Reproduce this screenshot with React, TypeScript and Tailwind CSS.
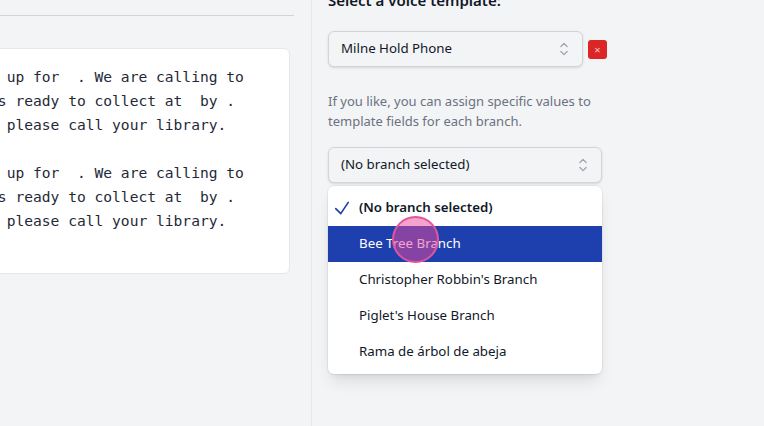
import * as React from "react"

const mono = { fontFamily: '"DejaVu Sans Mono", "Liberation Mono", monospace' }

const messageLines = [
  "ur hold is up for  . We are calling to",
  "our item is ready to collect at  by .",
  "questions, please call your library.",
  "",
  "ur hold is up for  . We are calling to",
  "our item is ready to collect at  by .",
  "questions, please call your library.",
  "",
]

const branches = [
  "(No branch selected)",
  "Bee Tree Branch",
  "Christopher Robbin's Branch",
  "Piglet's House Branch",
  "Rama de árbol de abeja",
]

function UpDown() {
  return (
    <svg viewBox="0 0 24 24" fill="none" stroke="currentColor" strokeWidth={1.5} className="w-5 h-5 shrink-0 text-[#9ca3af]">
      <path strokeLinecap="round" strokeLinejoin="round" d="M8.25 15 12 18.75 15.75 15m-7.5-6L12 5.25 15.75 9" />
    </svg>
  )
}

export default function App() {
  return (
    <div
      className="flex h-[426px] w-[764px] overflow-hidden bg-[#f3f4f6] text-[#111827]"
      style={{ fontFamily: '"Noto Sans", "Open Sans", sans-serif' }}
    >
      {/* Left: message preview */}
      <div className="w-[312px] shrink-0 overflow-hidden border-r border-[#e5e7eb]">
        <div className="ml-[-107px] w-[401px]">
          <div className="h-[16px] border-b border-[#d1d5db]" />
          <div className="mt-[32px] w-[397px] rounded-md border border-[#e5e7eb] bg-white px-4 pt-4 pb-4">
            {messageLines.map((line, i) => (
              <div key={i} style={mono} className="h-6 whitespace-pre text-[14.6px] leading-6 text-[#1f2937]">
                {line}
              </div>
            ))}
          </div>
        </div>
      </div>

      {/* Right: template settings */}
      <div className="flex-1 pl-4">
        <div className="w-[274px]">
          <h3 className="-mt-[10px] text-[15px] font-semibold leading-5">Select a voice template:</h3>

          <div className="mt-[21px] flex w-max items-center">
            <div className="flex h-[36px] w-[255px] shrink-0 items-center justify-between rounded-md border border-[#d1d5db] bg-[#f3f4f6] pl-3 pr-2 shadow-sm">
              <span className="text-[13.3px]">Milne Hold Phone</span>
              <UpDown />
            </div>
            <button className="ml-[5px] flex h-[19px] w-[19px] shrink-0 items-center justify-center rounded-[3px] bg-[#dc2626] text-[11px] leading-none text-[#fecaca]">
              ×
            </button>
          </div>

          <p className="mt-[24px] text-[13px] leading-5 text-[#6b7280]">
            If you like, you can assign specific values to template fields for each branch.
          </p>

          <div className="relative mt-4">
            <div className="flex h-[36px] items-center justify-between rounded-md border border-[#d1d5db] bg-[#f3f4f6] pl-3 pr-2 shadow-sm">
              <span className="text-[13.3px]">(No branch selected)</span>
              <UpDown />
            </div>

            <ul className="absolute left-0 right-0 top-full mt-[3px] rounded-md bg-white py-1 shadow-lg ring-1 ring-black/5">
              {branches.map((b, i) => (
                <li
                  key={b}
                  className={
                    "relative flex h-9 items-center pl-[31px] text-[13.3px] " +
                    (i === 1 ? "bg-[#1e40af] text-white" : "text-[#111827]") +
                    (i === 0 ? " font-semibold" : "")
                  }
                >
                  {i === 0 && (
                    <span className="absolute inset-y-0 left-1 flex items-center text-[#1e40af]">
                      <svg viewBox="0 0 24 24" fill="none" stroke="currentColor" strokeWidth={2} className="h-5 w-5">
                        <path strokeLinecap="round" strokeLinejoin="round" d="m4.5 12.75 6 6 9-13.5" />
                      </svg>
                    </span>
                  )}
                  {b}
                </li>
              ))}
            </ul>
          </div>
        </div>
      </div>

      {/* click indicator */}
      <div className="pointer-events-none absolute left-[392px] top-[216px] h-[47px] w-[47px] rounded-full border-2 border-[#e2559c] bg-[#ec4899]/50" />
    </div>
  )
}
